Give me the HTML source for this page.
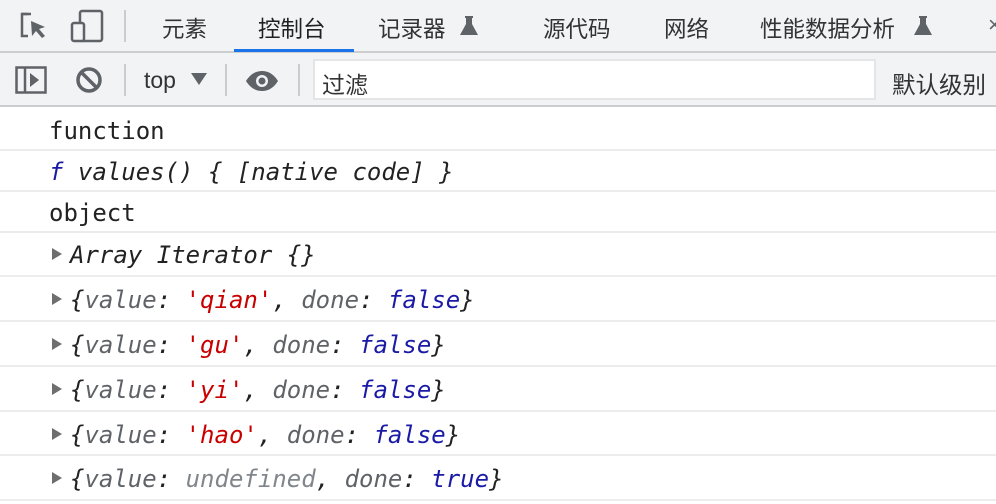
<!DOCTYPE html>
<html><head><meta charset="utf-8"><style>
*{margin:0;padding:0;box-sizing:border-box}
body{width:996px;height:504px;overflow:hidden;background:#fff;font-family:"Liberation Sans","Noto Sans CJK SC",sans-serif;position:relative}
.tb1{position:absolute;left:0;top:0;width:996px;height:53px;background:#f1f3f4;border-bottom:2px solid #cbcdd1}
.tb2{position:absolute;left:0;top:53px;width:996px;height:54px;background:#f1f3f4;border-bottom:2px solid #cbcdd1}
.t{position:absolute;top:12px;font-size:22.5px;color:#333;white-space:nowrap}
.sep{position:absolute;width:2px;background:#ccc}
.row{position:absolute;left:0;width:996px;border-bottom:2px solid #ececec;font-family:"DejaVu Sans Mono","Liberation Mono",monospace;font-size:24px;color:#222;white-space:pre}
.row span.x{position:absolute;left:49px}
.i{font-style:italic}
.k{color:#5f6368}.s{color:#c80000}.b{color:#1a1aa6}.g{color:#80868b}
.tri{position:absolute;left:52px;width:0;height:0;border-left:10px solid #6e6e6e;border-top:6px solid transparent;border-bottom:6px solid transparent}
</style></head><body>
<div class="tb1">
<svg style="position:absolute;left:18px;top:10px" width="30" height="34" viewBox="0 0 30 34"><path d="M10 4H4v22h6" fill="none" stroke="#5f6368" stroke-width="2.5"/><path d="M4 4h9" stroke="#5f6368" stroke-width="2.5"/><path d="M13 11l14 6-6 2 6 7-3 2-6-7-4 5z" fill="#5f6368"/></svg>
<svg style="position:absolute;left:70px;top:9px" width="34" height="34" viewBox="0 0 34 34"><rect x="10" y="2" width="22" height="30" rx="2" fill="none" stroke="#5f6368" stroke-width="2.5"/><rect x="2" y="14" width="12" height="18" rx="2" fill="#f1f3f4" stroke="#5f6368" stroke-width="2.5"/></svg>
<div class="sep" style="left:124px;top:10px;height:32px"></div>
<div class="t" style="left:162px">元素</div>
<div class="t" style="left:258px;color:#202124">控制台</div>
<div style="position:absolute;left:234px;top:49px;width:120px;height:3px;background:#1a73e8"></div>
<div class="t" style="left:378px">记录器</div>
<svg style="position:absolute;left:459px;top:15px" width="20" height="22" viewBox="0 0 20 22"><path d="M6 1h8v2h-1v6l6 11H1L7 9V3H6z" fill="#5f6368"/></svg>
<div class="t" style="left:543px">源代码</div>
<div class="t" style="left:664px">网络</div>
<div class="t" style="left:760px">性能数据分析</div>
<svg style="position:absolute;left:913px;top:15px" width="20" height="22" viewBox="0 0 20 22"><path d="M6 1h8v2h-1v6l6 11H1L7 9V3H6z" fill="#5f6368"/></svg>
<div class="t" style="left:988px;color:#5f6368">×</div>
</div>
<div class="tb2">
<svg style="position:absolute;left:15px;top:13px" width="32" height="28" viewBox="0 0 32 28"><rect x="1.5" y="1.5" width="29" height="25" fill="none" stroke="#5f6368" stroke-width="2.5"/><path d="M10 2v24" stroke="#5f6368" stroke-width="2.5"/><path d="M15 7l9 7-9 7z" fill="#5f6368"/></svg>
<svg style="position:absolute;left:75px;top:13px" width="28" height="28" viewBox="0 0 28 28"><circle cx="14" cy="14" r="11" fill="none" stroke="#5f6368" stroke-width="3.5"/><path d="M6 6l16 16" stroke="#5f6368" stroke-width="3.5"/></svg>
<div class="sep" style="left:124px;top:11px;height:32px"></div>
<div class="t" style="left:144px;top:14px;font-size:23px;color:#333">top</div>
<svg style="position:absolute;left:191px;top:20px" width="16" height="12"><path d="M0 0h16L8 12z" fill="#5f6368"/></svg>
<div class="sep" style="left:225px;top:11px;height:32px"></div>
<svg style="position:absolute;left:245px;top:17px" width="34" height="22" viewBox="0 0 34 22"><path d="M1 11C6 3 12 1 17 1s11 2 16 10c-5 8-11 10-16 10S6 19 1 11z" fill="#5f6368"/><circle cx="17" cy="11" r="6" fill="#f1f3f4"/><circle cx="17" cy="11" r="3.5" fill="#5f6368"/></svg>
<div class="sep" style="left:298px;top:11px;height:32px"></div>
<div style="position:absolute;left:313px;top:6px;width:563px;height:41px;background:#fff;border:2px solid #e4e5e7"></div>
<div class="t" style="left:322px;top:13px;font-size:23px;color:#333">过滤</div>
<div class="t" style="left:892px;top:13px;font-size:23.5px;color:#333">默认级别</div>
</div>
<div class="row" style="top:109px;height:42px"><span class="x" style="top:8px">function</span></div>
<div class="row" style="top:151px;height:41px"><span class="x i" style="top:7px"><span class="b">f</span> values() { [native code] }</span></div>
<div class="row" style="top:192px;height:41px"><span class="x" style="top:7px">object</span></div>
<div class="row" style="top:233px;height:44px"><div class="tri" style="top:15px"></div><span class="x i" style="left:70px;top:8px">Array Iterator {}</span></div>
<div class="row" style="top:277px;height:45px"><div class="tri" style="top:16px"></div><span class="x i" style="left:70px;top:9px">{<span class="k">value</span>: <span class="s">'qian'</span>, <span class="k">done</span>: <span class="b">false</span>}</span></div>
<div class="row" style="top:322px;height:45px"><div class="tri" style="top:16px"></div><span class="x i" style="left:70px;top:9px">{<span class="k">value</span>: <span class="s">'gu'</span>, <span class="k">done</span>: <span class="b">false</span>}</span></div>
<div class="row" style="top:367px;height:45px"><div class="tri" style="top:16px"></div><span class="x i" style="left:70px;top:9px">{<span class="k">value</span>: <span class="s">'yi'</span>, <span class="k">done</span>: <span class="b">false</span>}</span></div>
<div class="row" style="top:412px;height:44px"><div class="tri" style="top:16px"></div><span class="x i" style="left:70px;top:9px">{<span class="k">value</span>: <span class="s">'hao'</span>, <span class="k">done</span>: <span class="b">false</span>}</span></div>
<div class="row" style="top:456px;height:45px"><div class="tri" style="top:16px"></div><span class="x i" style="left:70px;top:9px">{<span class="k">value</span>: <span class="g">undefined</span>, <span class="k">done</span>: <span class="b">true</span>}</span></div>
</body></html>
